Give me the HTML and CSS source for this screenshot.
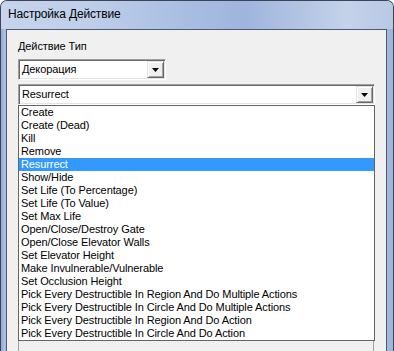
FILE: index.html
```html
<!DOCTYPE html>
<html>
<head>
<meta charset="utf-8">
<link rel="stylesheet" href="styles.css">
</head>
<body>
<div class="window">
  <div class="titlebar"><span class="title">Настройка Действие</span></div>
  <div class="frame">
    <div class="client">
      <div class="label">Действие Тип</div>
      <div class="combo combo-short">
        <span class="combo-text">Декорация</span>
        <span class="combo-btn"><svg width="7" height="4" viewBox="0 0 7 4"><polygon points="0,0 7,0 3.5,4" fill="#000"/></svg></span>
      </div>
      <div class="combo-wrap">
        <div class="combo">
          <span class="combo-text">Resurrect</span>
          <span class="combo-btn"><svg width="7" height="4" viewBox="0 0 7 4"><polygon points="0,0 7,0 3.5,4" fill="#000"/></svg></span>
        </div>
        <ul class="dropdown">
          <li>Create</li>
          <li>Create (Dead)</li>
          <li>Kill</li>
          <li>Remove</li>
          <li class="selected">Resurrect</li>
          <li>Show/Hide</li>
          <li>Set Life (To Percentage)</li>
          <li>Set Life (To Value)</li>
          <li>Set Max Life</li>
          <li>Open/Close/Destroy Gate</li>
          <li>Open/Close Elevator Walls</li>
          <li>Set Elevator Height</li>
          <li>Make Invulnerable/Vulnerable</li>
          <li>Set Occlusion Height</li>
          <li>Pick Every Destructible In Region And Do Multiple Actions</li>
          <li>Pick Every Destructible In Circle And Do Multiple Actions</li>
          <li>Pick Every Destructible In Region And Do Action</li>
          <li>Pick Every Destructible In Circle And Do Action</li>
        </ul>
      </div>
      <div class="params"></div>
    </div>
  </div>
</div>
</body>
</html>
```
FILE: styles.css
```css
html, body {
  margin: 0;
  padding: 0;
  width: 394px;
  height: 351px;
  overflow: hidden;
  background: #ffffff;
}
.window {
  width: 394px;
  height: 351px;
  box-sizing: border-box;
  border: 1px solid #3c4456;
  border-bottom: none;
  border-radius: 7px 7px 0 0;
  overflow: hidden;
  display: flex;
  flex-direction: column;
  background: #a9bcdd;
}
.titlebar {
  height: 28px;
  flex: none;
  display: flex;
  align-items: center;
  padding-left: 7px;
  background: linear-gradient(to right, #c5d4ec 0%, #bfcfea 22%, #aabfe2 45%, #9fb5dd 62%, #b5c6e4 78%, #c4d2ea 88%, #b9c8e4 100%);
}
.title {
  font-family: "Liberation Sans", Arial, sans-serif;
  font-size: 12px;
  letter-spacing: -0.15px;
  color: #000;
  position: relative;
  top: -1px;
}
.frame {
  flex: 1;
  display: flex;
  min-height: 0;
  padding: 0 6px 0 5px;
  background: linear-gradient(to right, #93a9d3 0px, #a9bde0 3px, #a9bde0 380px, #9db2da 394px);
}
.client {
  flex: 1;
  display: flex;
  flex-direction: column;
  border: 1px solid #4d5a70;
  border-bottom: none;
  background: #f0f0f0;
  padding: 10px 11px 0 11px;
  font-family: "Liberation Sans", Arial, sans-serif;
  font-size: 11px;
  letter-spacing: -0.1px;
  color: #000;
}
.label {
  line-height: 13px;
  height: 13px;
  margin-bottom: 6px;
}
.combo {
  height: 21px;
  box-sizing: border-box;
  border: 1px solid;
  border-color: #a0a0a0 #ffffff #ffffff #a0a0a0;
  box-shadow: inset 1px 1px 0 #696969, inset -1px -1px 0 #e3e3e3;
  background: #fff;
  display: flex;
  align-items: center;
  padding: 1px;
}
.combo-short {
  width: 148px;
  margin-bottom: 4px;
}
.combo-text {
  flex: 1;
  padding-left: 2px;
  line-height: 13px;
}
.combo-btn {
  width: 17px;
  height: 17px;
  box-sizing: border-box;
  background: #f0f0f0;
  border: 1px solid;
  border-color: #e3e3e3 #696969 #696969 #e3e3e3;
  box-shadow: inset 1px 1px 0 #ffffff, inset -1px -1px 0 #a0a0a0;
  display: flex;
  align-items: center;
  justify-content: center;
}
.combo-btn svg {
  display: block;
  margin-top: 1px;
}
.combo-wrap {
  position: relative;
  flex: none;
}
.dropdown {
  position: absolute;
  top: 100%;
  left: 0;
  right: 0;
  margin: 0;
  padding: 0;
  list-style: none;
  background: #fff;
  border: 1px solid #646464;
  z-index: 2;
}
.dropdown li {
  height: 13px;
  line-height: 13px;
  padding-left: 2px;
  white-space: nowrap;
}
.dropdown li.selected {
  background: #3399ff;
  color: #fff;
}
.params {
  flex: 1;
  margin-top: 6px;
  margin-right: 1px;
  border: 1px solid #a0a0a0;
  border-bottom: none;
}
```
